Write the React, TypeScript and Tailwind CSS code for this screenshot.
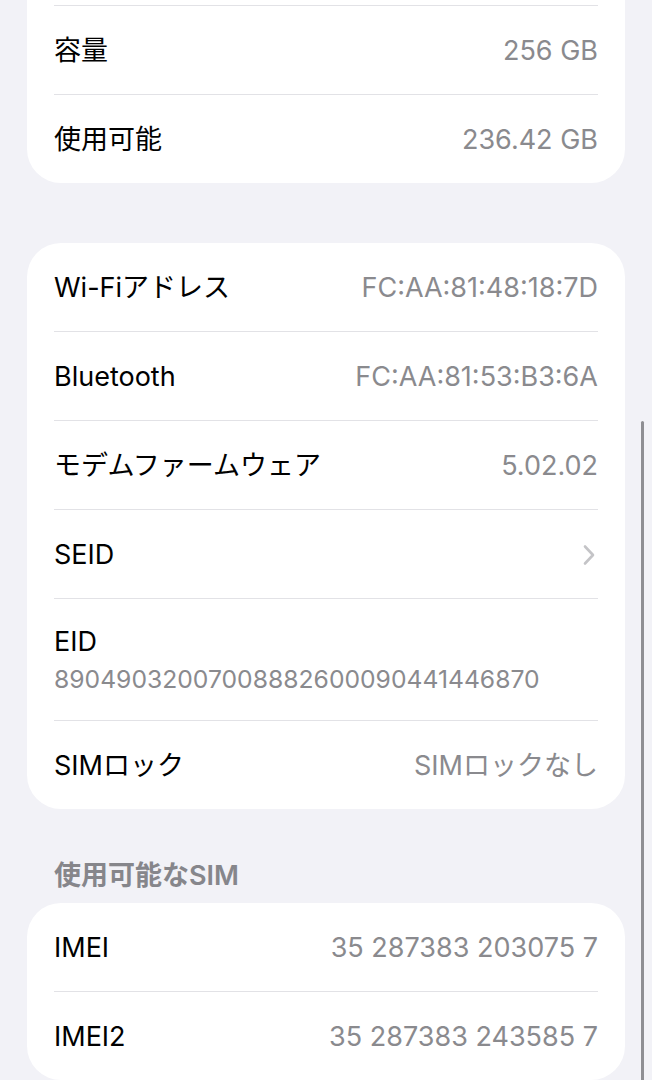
import React from "react";

type Row = {
  label: string;
  value?: string;
  chevron?: boolean;
  stacked?: boolean;
};

const font = {
  fontFamily: '"Inter", "Noto Sans CJK JP", sans-serif',
};

const Chevron = () => (
  <svg width="14" height="22" viewBox="0 0 14 22" fill="none" className="mr-[2px]">
    <path
      d="M3 2.5 L11 11 L3 19.5"
      stroke="#c4c4c7"
      strokeWidth="2.6"
      strokeLinecap="round"
      strokeLinejoin="round"
    />
  </svg>
);

const Card = ({ rows }: { rows: Row[] }) => (
  <div className="mx-[27px] rounded-[34px] bg-white px-[27px]">
    {rows.map((row, i) => {
      const last = i === rows.length - 1;
      return (
        <div
          key={row.label + i}
          className={`${last ? "" : "border-b border-[#e2e2e6]"} ${
            row.stacked ? "h-[122px]" : last ? "h-[88px]" : "h-[89px]"
          }`}
        >
          {row.stacked ? (
            <div className="flex h-full flex-col justify-center">
              <div className="text-[27px] leading-[34px] text-black">{row.label}</div>
              <div className="mt-[5px] text-[24.7px] leading-[30px] text-[#8a8a8e]">
                {row.value}
              </div>
            </div>
          ) : (
            <div className="flex h-full items-center justify-between pt-[2px]">
              <span className="text-[27px] text-black">{row.label}</span>
              {row.chevron ? (
                <Chevron />
              ) : (
                <span className="text-[27px] text-[#8a8a8e]">{row.value}</span>
              )}
            </div>
          )}
        </div>
      );
    })}
  </div>
);

export default function App() {
  const storage: Row[] = [
    { label: "", value: "" },
    { label: "容量", value: "256 GB" },
    { label: "使用可能", value: "236.42 GB" },
  ];
  const network: Row[] = [
    { label: "Wi-Fiアドレス", value: "FC:AA:81:48:18:7D" },
    { label: "Bluetooth", value: "FC:AA:81:53:B3:6A" },
    { label: "モデムファームウェア", value: "5.02.02" },
    { label: "SEID", chevron: true },
    { label: "EID", value: "89049032007008882600090441446870", stacked: true },
    { label: "SIMロック", value: "SIMロックなし" },
  ];
  const sim: Row[] = [
    { label: "IMEI", value: "35 287383 203075 7" },
    { label: "IMEI2", value: "35 287383 243585 7" },
  ];

  return (
    <div className="relative h-[1080px] w-[652px] overflow-hidden bg-[#f2f2f7]" style={font}>
      <div className="-mt-[83px]">
        <Card rows={storage} />
        <div className="h-[60px]" />
        <Card rows={network} />
        <div className="px-[54px] pt-[51px] pb-[12px]">
          <div className="text-[27px] font-semibold leading-[31px] text-[#86868b]">
            使用可能なSIM
          </div>
        </div>
        <Card rows={sim} />
      </div>
      {/* scroll indicator */}
      <div className="absolute left-[641px] top-[421px] h-[680px] w-[3px] rounded-full bg-[#8e8e93]" />
    </div>
  );
}
